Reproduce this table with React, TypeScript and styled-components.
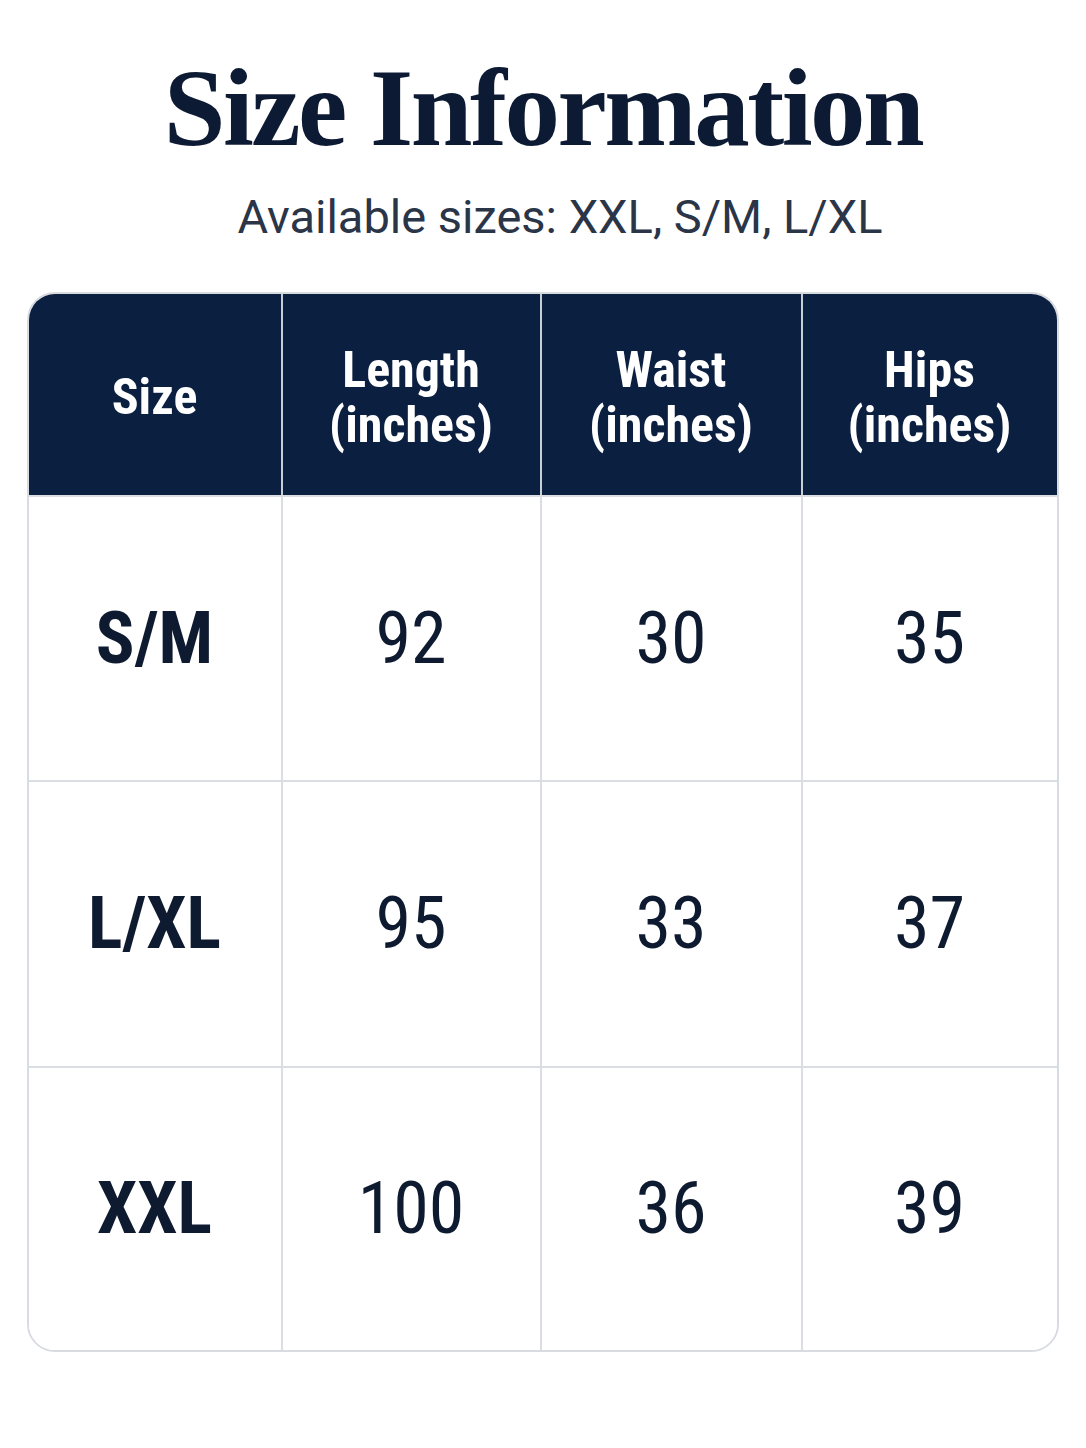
import React from "react";
import styled, { createGlobalStyle } from "styled-components";

const GlobalStyle = createGlobalStyle`
  html, body { margin: 0; padding: 0; background: #ffffff; }
  body { font-family: Roboto, "Liberation Sans", sans-serif; }
`;

const Page = styled.main`
  width: 1086px;
  min-height: 1448px;
  box-sizing: border-box;
  padding-top: 52px;
  display: flex;
  flex-direction: column;
  align-items: center;
`;

const Title = styled.h1`
  margin: 0;
  font-family: "Liberation Serif", "Times New Roman", serif;
  font-weight: 700;
  font-size: 111px;
  line-height: 111px;
  letter-spacing: -2.5px;
  color: #0d1a33;
  text-align: center;
`;

const Subtitle = styled.p`
  margin: 30px 0 0 34px;
  font-family: Roboto, "Liberation Sans", sans-serif;
  font-weight: 400;
  font-size: 47px;
  line-height: 48px;
  color: #2b3548;
  text-align: center;
`;

const Table = styled.div`
  margin: 51px 0 0 -1px;
  width: 1032px;
  box-sizing: border-box;
  border: 2px solid #d8dbe0;
  border-radius: 28px;
  overflow: hidden;
  display: grid;
  grid-template-columns: 252px 259px 261px 1fr;
  grid-template-rows: 201px 285px 286px 1fr;
  height: 1060px;
  font-family: "Roboto Condensed", Roboto, "Liberation Sans", sans-serif;
  font-stretch: condensed;
`;

const HeadCell = styled.div<{ $first?: boolean }>`
  background: #0b1f40;
  color: #ffffff;
  display: flex;
  align-items: center;
  justify-content: center;
  text-align: center;
  padding-top: 6px;
  box-sizing: border-box;
  font-weight: 700;
  font-size: 50px;
  line-height: 55px;
  border-left: ${(p) => (p.$first ? "none" : "2px solid #c9ced6")};
`;

const Cell = styled.div<{ $first?: boolean; $label?: boolean }>`
  display: flex;
  align-items: center;
  justify-content: center;
  box-sizing: border-box;
  background: #ffffff;
  color: #0e1a30;
  font-weight: ${(p) => (p.$label ? 700 : 400)};
  font-size: 72px;
  line-height: 1;
  border-top: 2px solid #dadde2;
  border-left: ${(p) => (p.$first ? "none" : "2px solid #dadde2")};
`;

const headers = ["Size", "Length\n(inches)", "Waist\n(inches)", "Hips\n(inches)"];
const rows = [
  ["S/M", "92", "30", "35"],
  ["L/XL", "95", "33", "37"],
  ["XXL", "100", "36", "39"],
];

export default function App() {
  return (
    <>
      <GlobalStyle />
      <Page>
        <Title>Size Information</Title>
        <Subtitle>Available sizes: XXL, S/M, L/XL</Subtitle>
        <Table>
          {headers.map((h, i) => (
            <HeadCell key={h} $first={i === 0}>
              <span>
                {h.split("\n").map((line, j) => (
                  <React.Fragment key={j}>
                    {j > 0 && <br />}
                    {line}
                  </React.Fragment>
                ))}
              </span>
            </HeadCell>
          ))}
          {rows.map((r) =>
            r.map((v, i) => (
              <Cell key={r[0] + i} $first={i === 0} $label={i === 0}>
                {v}
              </Cell>
            ))
          )}
        </Table>
      </Page>
    </>
  );
}
